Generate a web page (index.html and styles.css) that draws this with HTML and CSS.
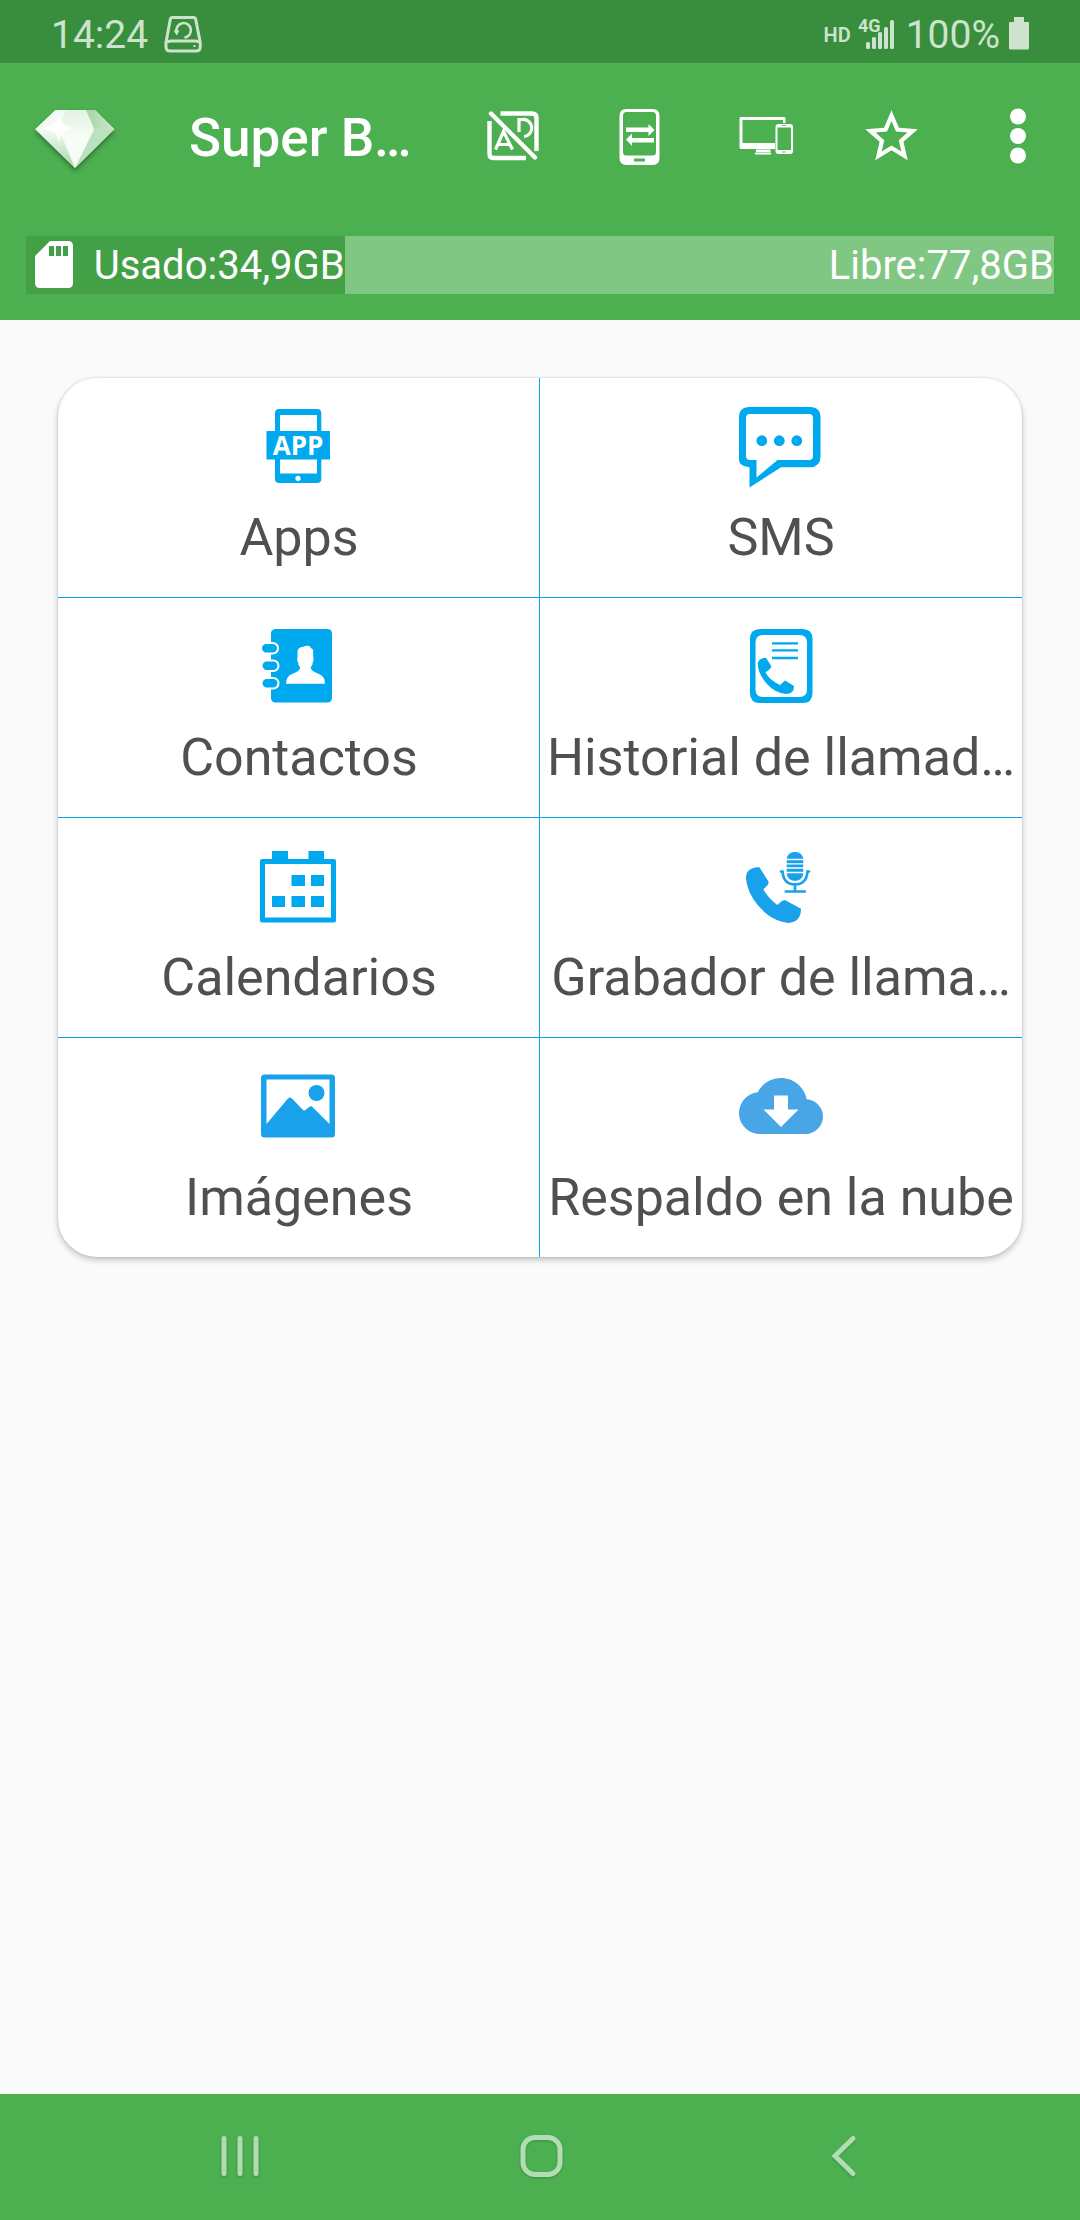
FILE: index.html
```html
<!DOCTYPE html>
<html lang="es">
<head>
<meta charset="utf-8">
<meta name="viewport" content="width=device-width">
<title>Super Backup</title>
<link rel="stylesheet" href="styles.css">
</head>
<body>
<div class="status">
  <span class="clock">14:24</span>
  <svg class="disk" width="38" height="38" viewBox="0 1 38 38" fill="none" stroke="currentColor" stroke-width="3">
    <path d="M8.500 2.500h21q1.800 0 2.200 1.800l4.500 23.200v4.500q0 4-4 4H6q-4 0-4-4v-4.500L6.300 4.300q.4-1.800 2.200-1.800z"/>
    <path d="M3 27.500q1-1.500 4-1.500h24q3 0 4 1.500"/>
    <path d="M12.500 17a7.300 7.300 0 1 1 8 5.600" stroke-width="2.600"/>
    <path d="M9.500 15.500l3.300 5 2.800-5z" fill="currentColor" stroke="none"/>
    <rect x="29.500" y="30" width="2" height="2" fill="currentColor" stroke="none"/>
  </svg>
  <span class="hd">HD</span>
  <svg class="signal" width="38" height="34" viewBox="0 1 38 34" fill="currentColor">
    <text class="network" x="0" y="15">4G</text>
    <rect x="8" y="25" width="4" height="7" rx="1.500"/>
    <rect x="14" y="20" width="4" height="12" rx="1.500"/>
    <rect x="20" y="15" width="4" height="17" rx="1.500"/>
    <rect x="26" y="10" width="4" height="22" rx="1.500"/>
    <rect x="32" y="3" width="4" height="29" rx="1.500"/>
  </svg>
  <span class="percent">100%</span>
  <svg class="battery" width="22" height="34" viewBox="0 2 22 34" fill="currentColor">
    <path d="M6 1h10v5h4q1 0 1 1v25q0 1.500-1.500 1.500h-17Q1 33.500 1 32V7q0-1 1-1h4z"/>
  </svg>
</div>

<header class="header">
  <div class="toolbar">
    <button class="tool gem" type="button" aria-label="Premium">
      <svg width="84" height="84" viewBox="33 95 84 84">
        <defs>
          <linearGradient id="left" x1="0" y1="0" x2="0" y2="1"><stop offset="0" stop-color="#f3faf3"/><stop offset=".35" stop-color="#f4fbf4"/><stop offset="1" stop-color="#a5d7a7"/></linearGradient>
          <linearGradient id="mid" x1="0" y1="0" x2="0" y2="1"><stop offset="0" stop-color="#e2f2e3"/><stop offset=".45" stop-color="#f6fcf6"/><stop offset="1" stop-color="#f5fbf5"/></linearGradient>
          <linearGradient id="right" x1="0" y1="0" x2="1" y2="0"><stop offset="0" stop-color="#a3d6a5"/><stop offset="1" stop-color="#cbe8cc"/></linearGradient>
        </defs>
        <path class="gem-shape" d="M55.500 110h39.500l19.300 19.300L75 168 35.300 129.300z" fill="#dff1e0"/>
        <path d="M55.500 110h11l-7.500 19.300L75 168 35.300 129.300z" fill="url(#left)"/>
        <path d="M66 110h20l8.300 19.300L75 168 59 129.300z" fill="url(#mid)"/>
        <path d="M86 110h9l19.300 19.300H94.300z" fill="url(#right)"/>
        <path d="M94.300 129.300h20L75 168z" fill="#bce1be"/>
        <path d="M59 116q1.500 10.500 16 12.300-14.500 1.700-16 14.700-1.500-13-18-14.700Q57.500 126.500 59 116z" fill="#fff"/>
      </svg>
    </button>
    <h1 class="title">Super B…</h1>
    <button class="tool" type="button" aria-label="Quitar anuncios">
      <svg width="63" height="63" viewBox="0 0 63 63" fill="none" stroke="currentColor" stroke-width="4.400">
        <path d="M18.500 8.500H50q4.500 0 4.500 4.500v33M7.500 16v33q0 4 4 4H44"/>
        <path d="M9 8.500l44 44" stroke-linecap="round"/>
        <path d="M13.500 44.500l8-18 9 18M16 39.500h12M37 27V14.500h3.500a8.500 8.500 0 0 1 1.500 17" stroke-width="3.200"/>
      </svg>
    </button>
    <button class="tool" type="button" aria-label="Transferir">
      <svg width="63" height="63" viewBox="0 0 63 63" fill="currentColor">
        <path fill-rule="evenodd" d="M18.500 4h26q7 0 7 7v42q0 7-7 7h-26q-7 0-7-7V11q0-7 7-7zm0 3q-3.500 0-3.500 3.500V47q0 3.500 3.500 3.500h26q3.500 0 3.500-3.500V10.500Q48 7 44.500 7zM26 53.500v3h11v-3z"/>
        <path d="M18 22.500h22.500V19l6 6-6 6v-4H18zM46 37.500H24V41l-6-6.500 6-6v4.500h22z"/>
      </svg>
    </button>
    <button class="tool" type="button" aria-label="Dispositivos">
      <svg width="63" height="63" viewBox="0 0 63 63" fill="currentColor">
        <path fill-rule="evenodd" d="M7 12h43q1.500 0 1.500 1.500V18H49v-3H8.500v23H41v6H7q-1.500 0-1.500-1.500v-29Q5.500 12 7 12z"/>
        <path d="M22 44.500h14.500V47H22zM21 47.500h16v2H21z"/>
        <path fill-rule="evenodd" d="M44.500 19H56q3 0 3 3v24q0 3-3 3H44.500q-3 0-3-3V22q0-3 3-3zm-1 3.500v22.500H57V22.500zM48 20.200v.8h4v-.8zM48.500 46.500v1h3v-1z"/>
      </svg>
    </button>
    <button class="tool" type="button" aria-label="Favorito">
      <svg width="63" height="63" viewBox="0 0 24 24" fill="currentColor">
        <path d="M22 9.240l-7.190-.62L12 2 9.190 8.630 2 9.240l5.460 4.730L5.820 21 12 17.270 18.180 21l-1.630-7.030L22 9.240zM12 15.400l-3.760 2.270 1-4.280-3.320-2.880 4.380-.38L12 6.100l1.710 4.040 4.380.38-3.320 2.880 1 4.280L12 15.400z"/>
      </svg>
    </button>
    <button class="tool" type="button" aria-label="Más opciones">
      <svg width="63" height="63" viewBox="0 0 63 63" fill="currentColor">
        <circle cx="32" cy="11.500" r="8"/><circle cx="32" cy="31" r="8"/><circle cx="32" cy="50.500" r="8"/>
      </svg>
    </button>
  </div>
  <div class="storage">
    <div class="used" style="width:31%">
      <svg width="38" height="48" viewBox="0 0 38 48" fill="currentColor">
        <path fill-rule="evenodd" d="M15 0h18q5 0 5 5v37q0 5-5 5H5q-5 0-5-5V15zM14 5v10h5V5zm7 0v10h5V5zm7 0v10h5V5z"/>
      </svg>
      <span>Usado:34,9GB</span>
    </div>
    <div class="free">Libre:77,8GB</div>
  </div>
</header>

<main class="content">
  <div class="card">
    <button class="cell" type="button">
      <svg class="icon" viewBox="0 0 84 84" fill="currentColor">
        <path fill-rule="evenodd" d="M22 5h38q4.300 0 4.300 4.300v65.400Q64.300 79 60 79H22q-4 0-4-4.300V9.300Q18 5 22 5zm1 6v58.500h37V11z"/>
        <path d="M9.500 27H73v28.500H9.500z"/>
        <circle cx="41" cy="74.300" r="2.600" fill="#fff"/>
        <text class="app-word" x="41" y="51" text-anchor="middle">APP</text>
      </svg>
      <span class="label">Apps</span>
    </button>
    <button class="cell" type="button">
      <svg class="icon" viewBox="0 0 84 84" fill="currentColor">
        <path fill-rule="evenodd" d="M10.500 3h60.500q10.500 0 10.500 10.500v39Q81.500 63 71 63.300H42L10.500 83.500V63.300Q0 62 0 56V13.500Q0 3 10.500 3zM11 10q-4 0-4 4v38q0 4 4 4h6.500v17.500L38.500 56H70q4 0 4-4V14q0-4-4-4z"/>
        <circle cx="22.800" cy="36.700" r="5.400"/><circle cx="40.300" cy="36.700" r="5.400"/><circle cx="57.800" cy="36.700" r="5.400"/>
      </svg>
      <span class="label">SMS</span>
    </button>
    <button class="cell" type="button">
      <svg class="icon" viewBox="0 0 84 84" fill="currentColor">
        <rect x="14" y="5" width="61" height="73.500" rx="4.500"/>
        <g stroke="#fff" stroke-width="2"><rect x="4" y="19" width="17" height="10.500" rx="5.200"/><rect x="4.500" y="36.500" width="17" height="10.500" rx="5.200"/><rect x="4.500" y="54" width="17" height="10.500" rx="5.200"/></g>
        <path fill="#fff" d="M29 59.700q0-7 6-9.700 8-3 8.200-6.500-2.200-2-2.200-5.500-1.500-2-.5-4.500V28q0-5 6-5.300 2-1.200 6-.7 1 2 3.500 3.500l.3 8q1 2.500-.5 4.500 0 3.500-2.200 5.500Q54 47 62 50q6 2.700 6 9.700z"/>
      </svg>
      <span class="label">Contactos</span>
    </button>
    <button class="cell" type="button">
      <svg class="icon" viewBox="0 0 84 84" fill="currentColor">
        <path fill-rule="evenodd" d="M21 5h42.500q10 0 10 10v54q0 10-10 10H21q-10 0-10-10V15Q11 5 21 5zm3 6q-7.500 0-7.500 7.500v47q0 7.500 7.500 7.500h36.500q7.500 0 7.500-7.500v-47q0-7.500-7.500-7.500z"/>
        <path d="M33 18.200h26v2.400H33zM33 25.200h26v2.400H33zM33 32.800h26v2.400H33z"/>
        <path d="M27 33.700l5.300 8.500q.5 2-5.800 6.100Q30 56 41 61l5-4.400 9 5.300Q55 70 47 70 36 69 28 60 19 50 18.700 39.500q.5-5 8.300-5.800z"/>
      </svg>
      <span class="label">Historial de llamad…</span>
    </button>
    <button class="cell" type="button">
      <svg class="icon" viewBox="0 0 84 84" fill="currentColor">
        <path fill-rule="evenodd" d="M15 7h16v8h20.500V7H67v8h10q2 0 2 2v59.500q0 2-2 2H5q-2 0-2-2V17q0-2 2-2h10zM8 20v53.500h66V20z"/>
        <path d="M34.500 31H48v11H34.500zM54 31h13v11H54zM15 52h13v11H15zM34.500 52H48v11H34.500zM54 52h13v11H54z"/>
      </svg>
      <span class="label">Calendarios</span>
    </button>
    <button class="cell" type="button">
      <svg class="icon azure" viewBox="0 0 84 84" fill="currentColor">
        <path d="M11 25.500q4-2.500 9.500-2.200l8.800 14q1.500 3-5 8 5 9 14 15.700l4-3.500q2-1.700 4-1.200l15.700 8.500Q62 78 49.300 79 36 77 27.700 70 9 54 7 34.500 6.800 28 11 25.500z"/>
        <rect x="47.700" y="8" width="16.600" height="28.700" rx="7.500"/>
        <path d="M47 15.500h18M47 19.800h18M47 24h18M47 28.500h18" stroke="#fff" stroke-width="1.300"/>
        <path d="M42 27.500h1.500q1 13 12.500 13t12.500-13H70M56 40v7.500M46.800 47.500h19" fill="none" stroke="currentColor" stroke-width="2.700" stroke-linecap="round"/>
      </svg>
      <span class="label">Grabador de llama…</span>
    </button>
    <button class="cell" type="button">
      <svg class="icon azure" viewBox="0 0 84 84" fill="currentColor">
        <path fill-rule="evenodd" d="M7.500 10.500h67q3.500 0 3.500 3.500v56q0 3.500-3.500 3.500h-67Q4 73.500 4 70V14q0-3.500 3.500-3.500zM9.500 15.500V60l21-25q2.500-3 5 0l10 10.500q1.500 1.500 3 .5l3-2.500q2.500-2.500 4.500 0L72.500 60V15.500z"/>
        <circle cx="59.500" cy="29" r="8"/>
      </svg>
      <span class="label">Imágenes</span>
    </button>
    <button class="cell" type="button">
      <svg class="icon sky" viewBox="0 0 24 24" fill="currentColor">
        <path d="M19.350 10.040C18.670 6.590 15.640 4 12 4 9.110 4 6.600 5.640 5.350 8.040 2.340 8.360 0 10.910 0 14c0 3.310 2.690 6 6 6h13c2.760 0 5-2.240 5-5 0-2.640-2.050-4.780-4.650-4.960zM17 13l-5 5-5-5h3V9h4v4h3z"/>
      </svg>
      <span class="label">Respaldo en la nube</span>
    </button>
  </div>
</main>

<nav class="navbar">
  <button type="button" aria-label="Recientes"><svg width="48" height="48" viewBox="0 0 48 48"><path d="M8 6.500v35M24 6.500v35M40 6.500v35"/></svg></button>
  <button type="button" aria-label="Inicio"><svg width="48" height="48" viewBox="0 0 48 48"><rect x="6" y="5.500" width="37" height="37" rx="12"/></svg></button>
  <button type="button" aria-label="Atrás"><svg width="48" height="48" viewBox="0 0 48 48"><path d="M34 6.500L16 24l18 17.500"/></svg></button>
</nav>
</body>
</html>
```
FILE: styles.css
```css
* {
  box-sizing: border-box;
}

body {
  margin: 0;
  min-height: 100vh;
  display: flex;
  flex-direction: column;
  background: #fafafa;
  font-family: Roboto, sans-serif;
}

button {
  margin: 0;
  padding: 0;
  border: 0;
  background: none;
  color: inherit;
  font: inherit;
}

svg {
  display: block;
  flex: none;
  overflow: visible;
}

/* System status bar */
.status {
  height: 63px;
  display: flex;
  align-items: center;
  padding: 6px 50px 0 51px;
  background: #388e3c;
  color: #cde3ce;
  font-size: 39px;
}

.disk {
  margin: 0 auto 0 16px;
}

.hd {
  font-size: 20px;
  font-weight: 600;
  margin-right: 7px;
}

.network {
  font-size: 18px;
  font-weight: 700;
}

.percent {
  margin: 0 8px 0 10px;
}

/* App header */
.header {
  background: #4caf50;
  color: #fff;
  padding-bottom: 26px;
}

.toolbar {
  height: 147px;
  display: flex;
  align-items: center;
}

.tool {
  width: 126px;
  height: 147px;
  display: flex;
  align-items: center;
  justify-content: center;
}

.gem {
  width: 150px;
}

.gem-shape {
  filter: drop-shadow(0 3px 2px rgba(0, 0, 0, 0.35));
}

.title {
  flex: 1;
  min-width: 0;
  margin: 0;
  padding: 3px 0 0 39px;
  font-size: 53px;
  font-weight: 500;
  white-space: nowrap;
}

.storage {
  display: flex;
  height: 58px;
  margin: 26px 26px 0;
  background: #81c784;
  font-size: 40px;
  white-space: nowrap;
}

.used {
  display: flex;
  align-items: center;
  justify-content: space-between;
  padding-left: 9px;
  background: #43a047;
}

.free {
  flex: 1;
  display: flex;
  align-items: center;
  justify-content: flex-end;
}

/* Backup categories */
.content {
  flex: 1;
  padding: 58px;
}

.card {
  display: grid;
  grid-template-columns: 1fr 1fr;
  overflow: hidden;
  border-radius: 39px;
  background: #fff;
  box-shadow: 0 3px 6px rgba(0, 0, 0, 0.22), 0 0 3px rgba(0, 0, 0, 0.12);
}

.cell {
  min-width: 0;
  display: flex;
  flex-direction: column;
  align-items: center;
  gap: 19px;
  padding: 26px 0 28px;
  border-bottom: 1px solid #03a9ea;
  color: #00a9ee;
}

.cell:nth-child(odd) {
  padding-left: 1px;
  border-right: 1px solid #03a9ea;
}

.cell:nth-last-child(-n + 2) {
  border-bottom: 0;
}

.icon {
  width: 84px;
  height: 84px;
}

.azure {
  color: #1aa1ec;
}

.sky {
  color: #48a6e6;
}

.app-word {
  fill: #fff;
  font: 700 26px "Open Sans", sans-serif;
}

.label {
  max-width: 100%;
  overflow: hidden;
  color: #505050;
  font-size: 52px;
  line-height: 62px;
  text-overflow: ellipsis;
  white-space: nowrap;
}

/* System navigation */
.navbar {
  height: 126px;
  display: grid;
  grid-template-columns: repeat(3, 1fr);
  padding: 0 86px 2px 89px;
  background: #4caf50;
}

.navbar button {
  display: flex;
  align-items: center;
  justify-content: center;
}

.navbar svg {
  fill: none;
  stroke: #b2dcb4;
  stroke-width: 5px;
  stroke-linecap: round;
  filter: drop-shadow(0 1px 1px rgba(0, 0, 0, 0.2));
}
```
